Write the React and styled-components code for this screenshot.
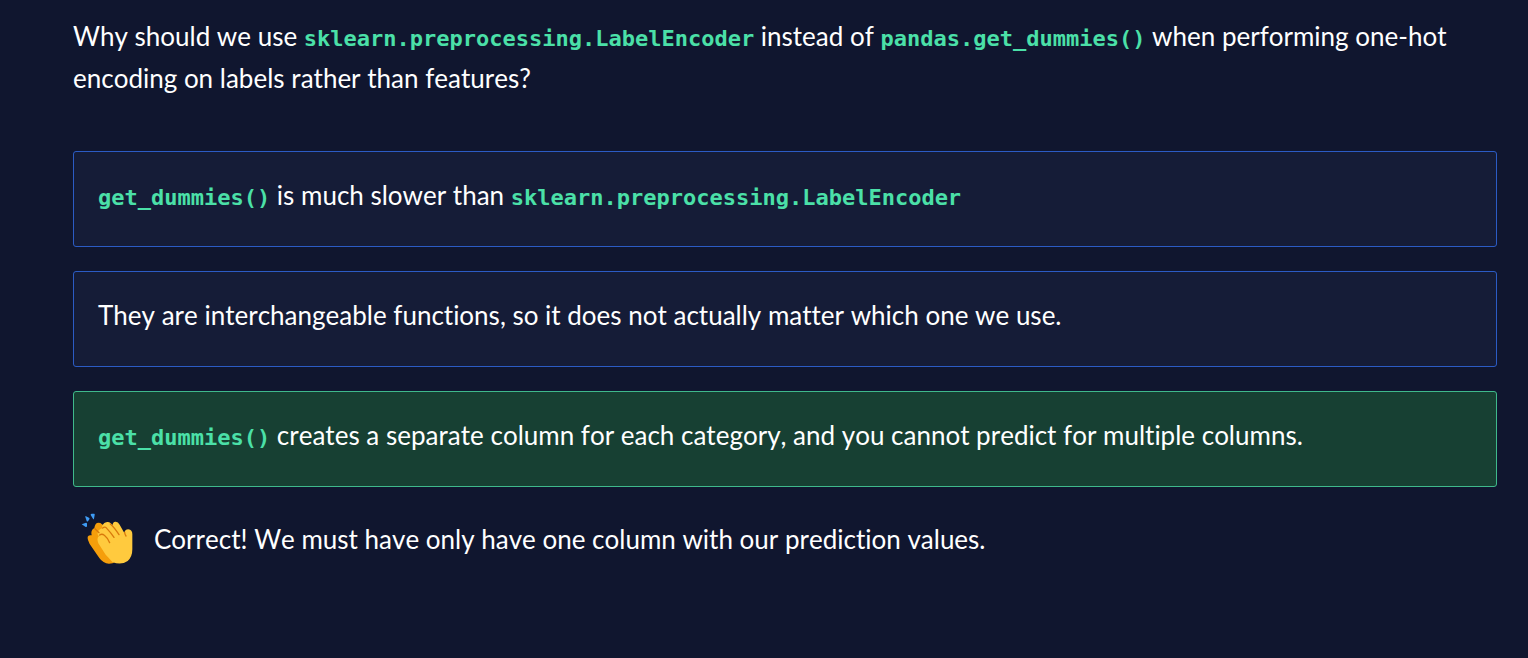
import React, { useState } from "react";
import styled, { createGlobalStyle } from "styled-components";

const GlobalStyle = createGlobalStyle`
  * { box-sizing: border-box; }
  body {
    margin: 0;
    background: #10162f;
    color: #ffffff;
    font-family: Lato, "Liberation Sans", sans-serif;
    font-size: 26px;
    font-kerning: none;
    font-variant-ligatures: none;
    line-height: 42px;
  }
`;

const Quiz = styled.main`
  display: flex;
  flex-direction: column;
  padding: 15px 31px 32px 73px;
`;

const Question = styled.h1`
  margin: 0 0 52px;
  font-size: inherit;
  font-weight: 400;
`;

const Code = styled.code`
  color: #4be0a8;
  font-family: "DejaVu Sans Mono", "Liberation Mono", monospace;
  font-size: 22px;
  font-weight: 700;
  line-height: 24px;
`;

const Options = styled.div`
  display: flex;
  flex-direction: column;
  gap: 24px;
`;

const Option = styled.button`
  width: 100%;
  padding: 22px 24px 30px;
  border: 1px solid ${(p) => (p.$correct ? "#3fb98c" : "#2b5bc4")};
  border-radius: 3px;
  background: ${(p) => (p.$correct ? "#174033" : "#151c37")};
  color: inherit;
  font: inherit;
  font-kerning: none;
  font-variant-ligatures: none;
  text-align: left;
  cursor: pointer;
`;

const Feedback = styled.div`
  display: flex;
  align-items: center;
  gap: 20px;
  padding: 26px 8px 0;
`;

const FeedbackText = styled.p`
  margin: 0;
`;

const Clap = () => (
  <svg width="53" height="52" viewBox="64 37 159 156" aria-hidden="true">
    <g fill="#3f9cf5">
      <path d="M66 71l13-5q3 0 3 3l0 8q-1 3-5 1z" />
      <path d="M77 49q-2-3 2-2l9 4q3 2 1 5l-4 6q-3 2-4-1z" />
      <path d="M93 43q-1-3 3-4l7 0q3 0 2 4l-2 11q-1 3-3 0z" />
    </g>
    <path
      d="M85 118Q81 105 91 104L96 104Q92 89 104 82Q107 62 122 67L131 74L160 130L166 184Q160 189 148 189Q130 188 119 172L90 130Z"
      fill="#f59e0b"
    />
    <path
      d="M116 128Q110 112 118 106L115 104Q111 90 121 86L127 83Q126 72 134 67Q146 60 153 68L159 73Q159 64 167 63Q175 62 180 72L194 97Q195 87 206 86Q218 88 218 101L218 146Q218 169 204 181Q184 195 158 184Q148 172 138 162Z"
      fill="#ffca3e"
    />
    <path
      d="M120 103Q127 98 134 104Q145 113 150 126M106 84L118 96M129 82Q136 76 142 84Q154 97 163 110M152 70Q163 79 178 102M195 95Q195 101 199 106"
      fill="none"
      stroke="#d9790b"
      strokeWidth="4"
      strokeLinecap="round"
      strokeLinejoin="round"
    />
  </svg>
);

const options = [
  <>
    <Code>get_dummies()</Code> is much slower than{" "}
    <Code>sklearn.preprocessing.LabelEncoder</Code>
  </>,
  <>They are interchangeable functions, so it does not actually matter which one we use.</>,
  <>
    <Code>get_dummies()</Code> creates a separate column for each category, and you cannot
    predict for multiple columns.
  </>,
];

const correctIndex = 2;

export default function App() {
  const [selected, setSelected] = useState(correctIndex);
  const solved = selected === correctIndex;

  return (
    <>
      <GlobalStyle />
      <Quiz>
        <Question id="question">
          Why should we use <Code>sklearn.preprocessing.LabelEncoder</Code> instead of{" "}
          <Code>pandas.get_dummies()</Code> when performing one-hot encoding on labels rather
          than features?
        </Question>
        <Options role="group" aria-labelledby="question">
          {options.map((content, i) => (
            <Option
              key={i}
              type="button"
              aria-pressed={selected === i}
              $correct={solved && selected === i}
              onClick={() => setSelected(i)}
            >
              {content}
            </Option>
          ))}
        </Options>
        {solved && (
          <Feedback role="status">
            <Clap />
            <FeedbackText>
              Correct! We must have only have one column with our prediction values.
            </FeedbackText>
          </Feedback>
        )}
      </Quiz>
    </>
  );
}
